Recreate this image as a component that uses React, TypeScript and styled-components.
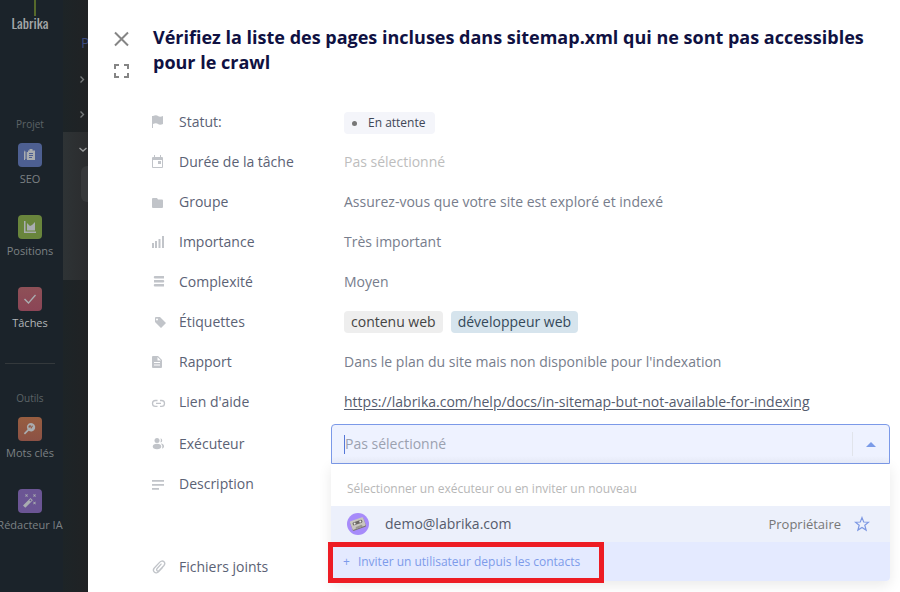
import React from "react";
import styled, { createGlobalStyle } from "styled-components";

const GlobalStyle = createGlobalStyle`
  * { box-sizing: border-box; }
  body {
    margin: 0;
    background: #fff;
    color: #5b6275;
    font-family: "Open Sans", "Noto Sans", sans-serif;
    font-size: 14px;
    line-height: 20px;
  }
  button, input { font: inherit; }
`;

const Page = styled.div`
  display: flex;
  min-height: 100vh;
  overflow: hidden;
`;

const Sidebar = styled.nav`
  display: flex;
  flex: none;
  flex-direction: column;
  align-items: center;
  width: 63px;
  padding-right: 3px;
  background: #1b232a;
`;

const LogoStem = styled.span`
  width: 2px;
  height: 16px;
  margin-left: 10px;
  background: #56692b;
`;

const Logo = styled.a`
  height: 101px;
  margin-top: -2px;
  color: #a3a6a8;
  font-family: "Liberation Sans Narrow", "Oswald", "Liberation Sans", sans-serif;
  font-size: 14px;
  line-height: 18px;
  text-decoration: none;
`;

const SectionName = styled.span`
  margin-bottom: 10px;
  color: #5d6367;
  font-size: 10px;
  line-height: 18px;
`;

const NavItem = styled.a<{ $active?: boolean }>`
  display: flex;
  flex-direction: column;
  align-items: center;
  gap: 2px;
  height: 72px;
  color: ${(p) => (p.$active ? "#b4b7b9" : "#7c8184")};
  font-size: 11px;
  line-height: 20px;
  text-decoration: none;
  white-space: nowrap;
`;

const NavIcon = styled.span<{ $color: string }>`
  display: flex;
  align-items: center;
  justify-content: center;
  width: 24px;
  height: 24px;
  border-radius: 4px;
  background: ${(p) => p.$color};
`;

const Divider = styled.hr`
  width: 50px;
  height: 1px;
  margin: 4px 0 25px;
  border: 0;
  background: #34393c;
`;

const Behind = styled.div`
  flex: none;
  width: 25px;
  overflow: hidden;
  background: linear-gradient(90deg, #1d2427, #202224);
`;

const BehindRow = styled.div<{ $open?: boolean }>`
  height: ${(p) => (p.$open ? "148px" : "35px")};
  padding: 10px 0 0 15px;
  background: ${(p) => (p.$open ? "linear-gradient(90deg, #2e3335, #2b2c2e)" : "none")};
  svg { display: block; }
`;

const BehindTitle = styled.div`
  height: 62px;
  padding: 33px 0 0 18px;
  color: #3b4a7e;
`;

const BehindCard = styled.div`
  height: 36px;
  margin: 10px 0 0 3px;
  border-radius: 6px 0 0 6px;
  background: #37393b;
`;

const Panel = styled.main`
  flex: 1;
  min-width: 0;
  padding: 25px 10px 5px 26px;
`;

const Header = styled.header`
  display: flex;
  gap: 23px;
  margin-bottom: 23px;
`;

const Tools = styled.div`
  display: flex;
  flex-direction: column;
  gap: 16px;
  padding-top: 6px;
`;

const ToolButton = styled.button`
  display: block;
  width: 16px;
  height: 16px;
  padding: 0;
  border: 0;
  background: none;
  color: #858585;
  svg { display: block; }
`;

const Title = styled.h1`
  margin: 0;
  color: #0f1142;
  font-size: 18px;
  font-weight: 700;
  line-height: 25px;
`;

const Fields = styled.div`
  display: flex;
  flex-direction: column;
  padding-left: 37px;
`;

const Field = styled.div<{ $tall?: boolean; $picker?: boolean }>`
  display: grid;
  grid-template-columns: 28px ${(p) => (p.$picker ? "152px" : "165px")} minmax(0, 1fr);
  align-items: center;
  height: 40px;
  margin-top: ${(p) => (p.$picker ? "2px" : "0")};
  margin-bottom: ${(p) => (p.$tall ? "43px" : "0")};
`;

const FieldIcon = styled.svg`
  display: block;
  width: 16px;
  height: 16px;
  color: #c1c4c9;
`;

const Label = styled.label``;

const Value = styled.span<{ $empty?: boolean }>`
  color: ${(p) => (p.$empty ? "#bdbdbd" : "#777d8c")};
`;

const HelpLink = styled.a`
  color: #555c6e;
  text-underline-offset: 2px;
`;

const Status = styled.button`
  display: flex;
  align-items: center;
  gap: 11px;
  justify-self: start;
  height: 22px;
  margin-top: 2px;
  padding: 0 10px 0 8px;
  border: 0;
  border-radius: 4px;
  background: #f4f5fa;
  color: #3f4757;
  font-size: 12px;
`;

const Dot = styled.span`
  width: 5px;
  height: 5px;
  border-radius: 50%;
  background: #777;
`;

const Tags = styled.div`
  display: flex;
  gap: 8px;
`;

const Tag = styled.span<{ $blue?: boolean }>`
  padding: 0 7px;
  border-radius: 4px;
  background: ${(p) => (p.$blue ? "#d6e4ed" : "#eeeeee")};
  color: ${(p) => (p.$blue ? "#34495a" : "#444")};
  line-height: 22px;
`;

const Picker = styled.div`
  position: relative;
`;

const PickerControl = styled.div`
  display: flex;
  align-items: center;
  height: 40px;
  border: 1px solid #7b99e8;
  border-radius: 4px 4px 0 0;
  background: linear-gradient(#eef2ff 80%, #e9edfa);
`;

const Caret = styled.span`
  width: 1px;
  height: 19px;
  margin-left: 12px;
  background: #5577d8;
`;

const PickerInput = styled.input`
  flex: 1;
  min-width: 0;
  padding: 0;
  border: 0;
  outline: 0;
  background: none;
  &::placeholder { color: #9ba1b0; opacity: 1; }
`;

const PickerToggle = styled.button`
  display: flex;
  align-items: center;
  justify-content: center;
  width: 37px;
  height: 24px;
  padding: 0;
  border: 0;
  border-left: 1px solid #e1e4eb;
  background: none;
`;

const Menu = styled.div`
  position: absolute;
  top: 100%;
  left: 0;
  right: 0;
  border-radius: 0 0 4px 4px;
  background: #fff;
  box-shadow: 0 4px 14px rgba(0, 0, 0, 0.09);
`;

const MenuHint = styled.div`
  padding: 15px 16px 7px;
  color: #b7b7b7;
  font-size: 12px;
`;

const Person = styled.button`
  display: flex;
  align-items: center;
  width: 100%;
  height: 36px;
  padding: 0 20px 0 16px;
  border: 0;
  background: #ecf0fb;
  color: #555b6b;
  text-align: left;
`;

const PersonName = styled.span`
  flex: 1;
  margin-left: 16px;
`;

const Role = styled.span`
  margin-right: 13px;
  color: #777;
  font-size: 13px;
`;

const Invite = styled.button`
  display: flex;
  align-items: center;
  gap: 8px;
  width: 100%;
  height: 39px;
  padding: 0 12px;
  border: 0;
  border-radius: 0 0 4px 4px;
  background: #e4eaff;
  color: #7d9bea;
  font-size: 12px;
`;

const Highlight = styled.div`
  position: absolute;
  left: -3px;
  bottom: -2px;
  width: 276px;
  height: 41px;
  border: 5px solid #ed1c24;
  pointer-events: none;
`;

const Glyph = ({ children }: { children: React.ReactNode }) => (
  <svg width="16" height="16" viewBox="0 0 16 16" fill="#a9adb0" stroke="none">{children}</svg>
);

const icons = {
  flag: <path fill="currentColor" d="M1 2h1c2-1 4-1 5 0s3 1 5 0v8c-2 1-4 1-5 0s-3-1-5 0v4H1z" />,
  calendar: <path fill="currentColor" fillRule="evenodd" d="M3 1h1v2h5V1h1v2h1a1 1 0 0 1 1 1v9a1 1 0 0 1-1 1H2a1 1 0 0 1-1-1V4a1 1 0 0 1 1-1h1zM2 6v7h9V6zM7 7h3v3H7z" />,
  folder: <path fill="currentColor" d="M2 4h4l1 1.500h4a1 1 0 0 1 1 1V13a1 1 0 0 1-1 1H2a1 1 0 0 1-1-1V5a1 1 0 0 1 1-1z" />,
  bars: <path fill="currentColor" d="M1 9h2v5H1zM4 7h2v7H4zM7.500 5h2v9h-2zM11 2h2v12h-2z" />,
  stack: <path fill="currentColor" d="M4 2h9v2.500H4a1.200 1.200 0 0 1 0-2.500zM3 6h9a1.200 1.200 0 0 1 0 2.500H3zM4 10h9v2.500H4a1.200 1.200 0 0 1 0-2.500z" />,
  tag: <path fill="currentColor" fillRule="evenodd" d="M4 4a1 1 0 0 1 1-1h4l6 6-5 5-6-6zM6 4.500a1 1 0 1 0 0 2 1 1 0 0 0 0-2z" />,
  doc: <path fill="currentColor" fillRule="evenodd" d="M2 2h5l4 4v7a1 1 0 0 1-1 1H2a1 1 0 0 1-1-1V3a1 1 0 0 1 1-1zM6.500 3v3.500H10zM3 8v1h6V8zM3 10.500v1h6v-1z" />,
  link: <path fill="none" stroke="currentColor" strokeWidth="1.300" d="M6.500 6.500H4.400a2.800 2.800 0 0 0 0 5.800h2.100M9 6.500h1.600a2.800 2.800 0 0 1 0 5.800H9M5 9.400h5" />,
  users: (
    <g fill="currentColor">
      <circle cx="6" cy="4.500" r="2.500" />
      <ellipse cx="6" cy="10.500" rx="4.200" ry="2.700" />
      <path d="M9.500 2.300a2.200 2.200 0 0 1 0 4.300q1-2 0-4.300zM10.500 7.500q2.800.5 2.500 3.500-1 1.500-2 1.500 1-3-1-5z" />
    </g>
  ),
  text: <path fill="currentColor" d="M1 4h12v1.800H1zM1 8h12v1.800H1zM1 12h7v1.800H1z" />,
  clip: (
    <path
      fill="none"
      stroke="currentColor"
      strokeWidth="1.300"
      strokeLinecap="round"
      d="M11.500 8.500l-4 4.300c-1 1.200-3 1.400-4.200.3-1.200-1.200-1-3 0-4.100l5.500-5.800c1-1.300 2.800-1.600 4-.6 1.200 1.100 1.200 2.700.2 3.900l-4.700 5c-.6.700-1.600.8-2.200.2-.7-.6-.6-1.600 0-2.200l4-4.400"
    />
  ),
};

type FieldProps = {
  icon: keyof typeof icons;
  label: string;
  htmlFor?: string;
  tall?: boolean;
  picker?: boolean;
  children?: React.ReactNode;
};

const FieldRow = ({ icon, label, htmlFor, tall, picker, children }: FieldProps) => (
  <Field $tall={tall} $picker={picker}>
    <FieldIcon viewBox="0 0 16 16" aria-hidden="true">{icons[icon]}</FieldIcon>
    <Label htmlFor={htmlFor} as={htmlFor ? "label" : "span"}>{label}</Label>
    {children}
  </Field>
);

const Chevron = ({ down }: { down?: boolean }) => (
  <svg width="14" height="14" viewBox="0 0 14 14" fill="none" stroke={down ? "#9a9c9d" : "#747879"} strokeWidth="1.400">
    <path d={down ? "M1.500 6l3.500 3 3.500-3" : "M2.500 4.500l3 3-3 3"} />
  </svg>
);

export default function App() {
  return (
    <>
      <GlobalStyle />
      <Page>
        <Sidebar>
          <LogoStem />
          <Logo href="#">Labrika</Logo>
          <SectionName>Projet</SectionName>
          <NavItem href="#">
            <NavIcon $color="#4d5f91">
              <Glyph>
                <path fillRule="evenodd" d="M6 3.500h1.500V2h3v1.500H13V13H5V5h1zM7 6v1h4V6zm0 2v1h4V8zm0 2v1h3v-1z" />
                <path d="M2 3l1 2v8H2zM3.500 4l.8 1v7h-.8z" />
              </Glyph>
            </NavIcon>
            SEO
          </NavItem>
          <NavItem href="#">
            <NavIcon $color="#69853c">
              <Glyph><path d="M2 2h1.500v10.500H14V14H2zM5 4l3 3 2-1 3-3v8.500H5z" /></Glyph>
            </NavIcon>
            Positions
          </NavItem>
          <NavItem href="#" $active>
            <NavIcon $color="linear-gradient(#8e5057, #8b4556)">
              <Glyph><path d="M3 7.500L2 8.600l4.500 4.400L14 4.500l-1-1-6.500 7.400z" /></Glyph>
            </NavIcon>
            Tâches
          </NavItem>
          <Divider />
          <SectionName>Outils</SectionName>
          <NavItem href="#">
            <NavIcon $color="linear-gradient(#975d40, #8b5145)">
              <Glyph>
                <path fillRule="evenodd" d="M9 2a4.200 4.200 0 1 1-2.300 7.700L3 13.500 1.800 12.300 5.500 8.500A4.200 4.200 0 0 1 9 2zM7 4.500L6.300 6l1 1 1-1.500L9 8l2-3-1-.5-.8 1.500-.7-2z" />
              </Glyph>
            </NavIcon>
            Mots clés
          </NavItem>
          <NavItem href="#">
            <NavIcon $color="#6b5594">
              <Glyph>
                <path fillRule="evenodd" d="M1 12.500L8.500 5l2.300 2.300L3.300 14.800zM8.600 6.300l-1.200 1.200 1 1 1.200-1.200z" />
                <path d="M3 1l1.500.8L6 1l-.8 1.500L6 4l-1.500-.8L3 4l.8-1.500zM11 1l1.500.8L14 1l-.8 1.500L14 4l-1.500-.8L11 4l.8-1.500zM11 8.500l1.500.8 1.500-.8-.8 1.500.8 1.500-1.500-.8-1.500.8.8-1.500z" />
              </Glyph>
            </NavIcon>
            Rédacteur IA
          </NavItem>
        </Sidebar>

        <Behind>
          <BehindTitle>P</BehindTitle>
          <BehindRow><Chevron /></BehindRow>
          <BehindRow><Chevron /></BehindRow>
          <BehindRow $open>
            <Chevron down />
            <BehindCard />
          </BehindRow>
        </Behind>

        <Panel>
          <Header>
            <Tools>
              <ToolButton aria-label="Fermer">
                <svg width="16" height="16" viewBox="0 0 16 16" stroke="currentColor" strokeWidth="2">
                  <path d="M1 1.500l13 13M14 1.500L1 14.500" />
                </svg>
              </ToolButton>
              <ToolButton aria-label="Plein écran">
                <svg width="16" height="16" viewBox="0 0 16 16" fill="none" stroke="currentColor" strokeWidth="2">
                  <path d="M1 6V2h4M10 2h4v4M14 10v4h-4M5 14H1v-4" />
                </svg>
              </ToolButton>
            </Tools>
            <Title>Vérifiez la liste des pages incluses dans sitemap.xml qui ne sont pas accessibles pour le crawl</Title>
          </Header>

          <Fields>
            <FieldRow icon="flag" label="Statut:">
              <Status><Dot />En attente</Status>
            </FieldRow>
            <FieldRow icon="calendar" label="Durée de la tâche">
              <Value $empty>Pas sélectionné</Value>
            </FieldRow>
            <FieldRow icon="folder" label="Groupe">
              <Value>Assurez-vous que votre site est exploré et indexé</Value>
            </FieldRow>
            <FieldRow icon="bars" label="Importance">
              <Value>Très important</Value>
            </FieldRow>
            <FieldRow icon="stack" label="Complexité">
              <Value>Moyen</Value>
            </FieldRow>
            <FieldRow icon="tag" label="Étiquettes">
              <Tags>
                <Tag>contenu web</Tag>
                <Tag $blue>développeur web</Tag>
              </Tags>
            </FieldRow>
            <FieldRow icon="doc" label="Rapport">
              <Value>Dans le plan du site mais non disponible pour l'indexation</Value>
            </FieldRow>
            <FieldRow icon="link" label="Lien d'aide">
              <span>
                <HelpLink href="https://labrika.com/help/docs/in-sitemap-but-not-available-for-indexing">
                  https://labrika.com/help/docs/in-sitemap-but-not-available-for-indexing
                </HelpLink>
              </span>
            </FieldRow>
            <FieldRow icon="users" label="Exécuteur" htmlFor="executor" picker>
              <Picker>
                <PickerControl>
                  <Caret />
                  <PickerInput id="executor" placeholder="Pas sélectionné" />
                  <PickerToggle aria-label="Fermer la liste">
                    <svg width="10" height="5" viewBox="0 0 10 5"><path fill="#7b9be8" d="M0 5l5-5 5 5z" /></svg>
                  </PickerToggle>
                </PickerControl>
                <Menu>
                  <MenuHint>Sélectionner un exécuteur ou en inviter un nouveau</MenuHint>
                  <Person>
                    <svg width="22" height="22" viewBox="0 0 22 22">
                      <circle cx="11" cy="11" r="11" fill="#a78bfa" />
                      <g transform="rotate(-20 11 11)">
                        <rect x="4" y="7" width="14" height="9" rx="1" fill="#77736f" />
                        <rect x="4" y="6" width="14" height="9" rx="1" fill="#c9c6c1" />
                        <rect x="6" y="8" width="10" height="3" rx="1" fill="#6b6764" />
                        <circle cx="8" cy="9.500" r="1" fill="#eee" />
                        <circle cx="14" cy="9.500" r="1" fill="#eee" />
                        <path d="M7 15l1-2h6l1 2z" fill="#9b9792" />
                      </g>
                    </svg>
                    <PersonName>demo@labrika.com</PersonName>
                    <Role>Propriétaire</Role>
                    <svg width="16" height="16" viewBox="0 0 16 16" fill="none" stroke="#7d98e3" strokeWidth="1.200">
                      <path d="M8 1.600l1.700 4.400 4.900.2-3.800 3 1.300 4.900L8 11.400l-4.100 2.700 1.300-4.900-3.800-3 4.900-.2z" />
                    </svg>
                  </Person>
                  <Invite><span>+</span><span>Inviter un utilisateur depuis les contacts</span></Invite>
                  <Highlight />
                </Menu>
              </Picker>
            </FieldRow>
            <FieldRow icon="text" label="Description" tall />
            <FieldRow icon="clip" label="Fichiers joints" />
          </Fields>
        </Panel>
      </Page>
    </>
  );
}
